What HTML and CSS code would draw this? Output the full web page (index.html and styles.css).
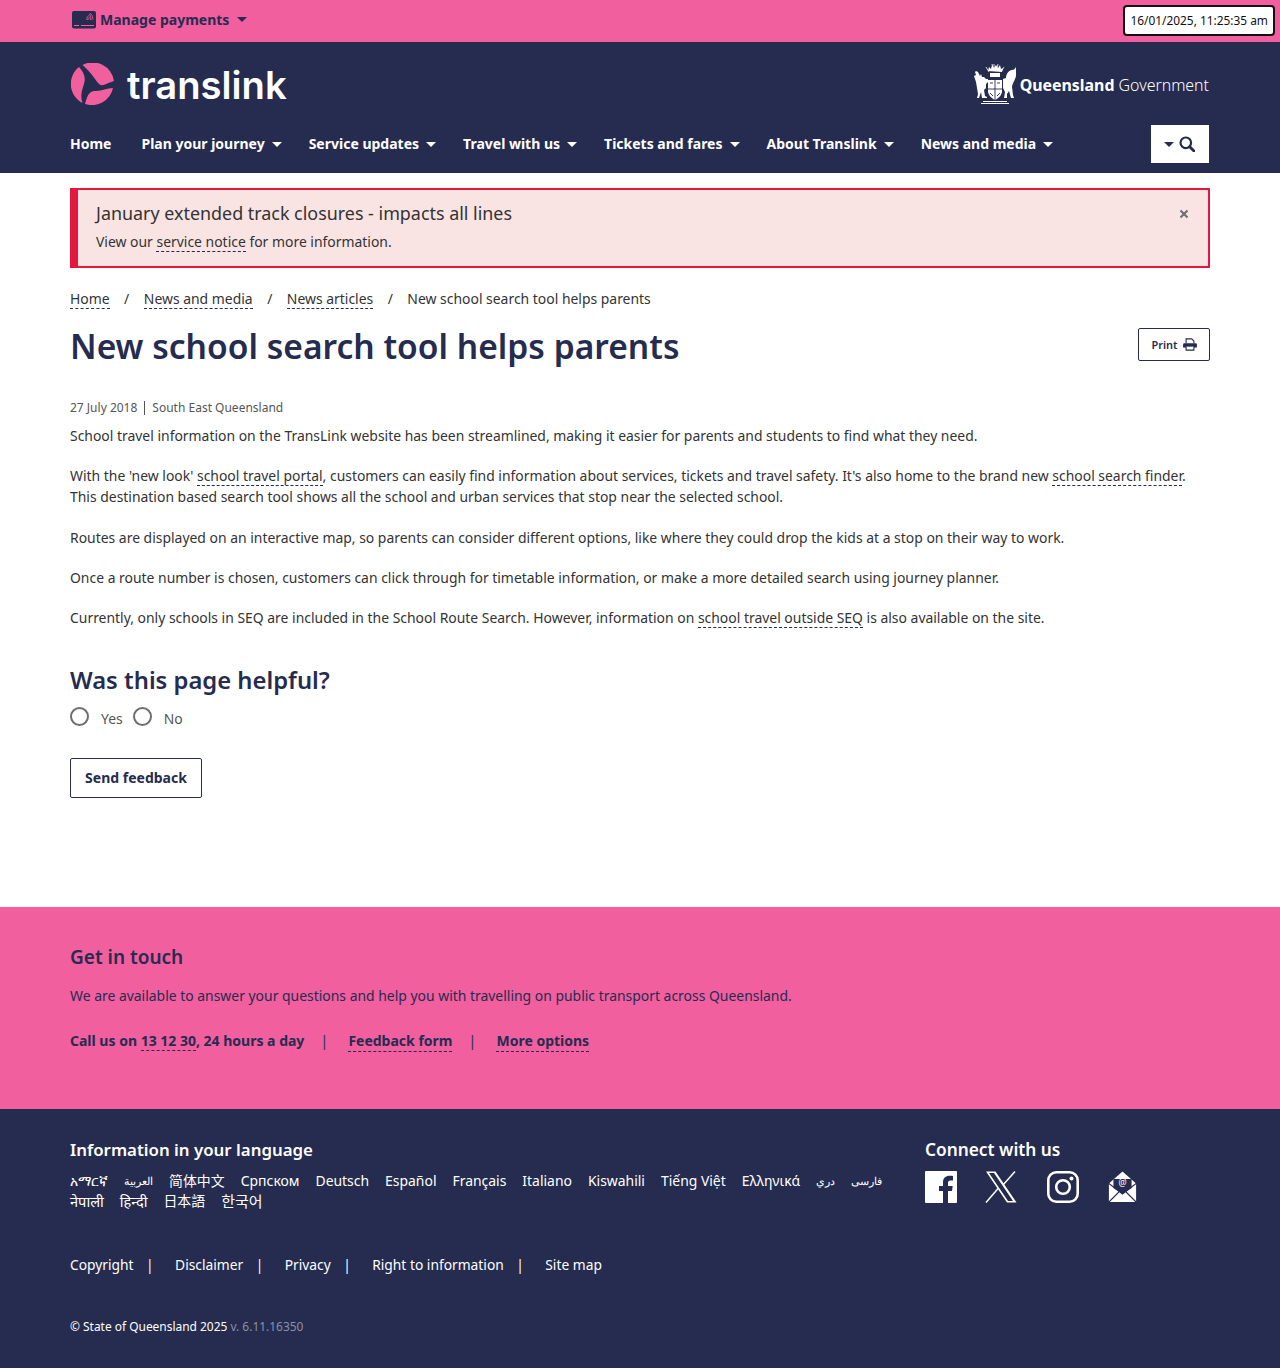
FILE: index.html
```html
<!DOCTYPE html>
<html lang="en">
<head>
<meta charset="utf-8">
<title>New school search tool helps parents</title>
<link rel="stylesheet" href="styles.css">
</head>
<body>
<div class="topbar">
  <a class="manage">
    <svg class="card-icon" viewBox="0 0 24 18" width="24" height="18"><rect x="0" y="0" width="24" height="17.500" rx="2" fill="#252c4f"/><rect x="2" y="14" width="5" height="1" fill="#f15f9f"/><rect x="9" y="14" width="13" height="1" fill="#f15f9f"/><path d="M15 8.500h1M14.500 8.500q.5-3.500 2.500-4M16.500 8.500q.5-2.500 1.500-3M18 8.500h1.500M19 8.500q0-3-1.500-5.500M21 8.500q0-4-3-6.500" stroke="#f15f9f" stroke-width=".8" fill="none"/></svg>
    <span>Manage payments</span><i class="caret caret-dark"></i>
  </a>
  <div class="clock">16/01/2025, 11:25:35 am</div>
</div>
<header class="site-header">
  <div class="brand-row">
    <div class="logo">
      <svg viewBox="2 3 44 42" width="44" height="42"><g fill="#f15f9f"><path d="M13.500 5A21.500 21.500 0 0 1 45 21C38 23 35 26 32 25C28 24 26 16 13.500 5Z"/><path d="M10 7A21.500 21.500 0 0 0 13.500 43C11 36 13 30 15 24C17 18 15 12 10 7Z"/><path d="M16 44A21.500 21.500 0 0 0 44 28C38 28 33 31 27 31C21 31 19 33 16 44Z"/></g></svg>
      <span class="logo-text">translink</span>
    </div>
    <div class="qg">
      <svg viewBox="4 2 42 44" width="42" height="44"><g fill="#fff" stroke="none"><path d="M18 10l1-4 2 2 1-4 2 3 2-3 2 3 2-3 1 4 2-1-1 4z"/><path d="M20 12h10v4H20z"/><path d="M6 10l2 1 2 4 1-2 1 3 2 0 2 2 2 0v3l-2 2v4l-2 2 1 6 2 1v1h-5l-1-6-2 6H7l1-4-1-6-1-6-2-6 2-1-1-3z"/><path d="M33 18l3-1c0-4 3-8 6-8 2 0 3-1 4-3-0 4 1 8-1 12-1 3-3 5-3 8l1 8 1 3h-3l-2-7-2 3v4h-3l1-6-2-4z"/><path d="M18 19h14v11c0 4-3 7-7 9-4-2-7-5-7-9z"/><path d="M11 42h28v1H11zM13 40h24v1H13z"/></g><g fill="none" stroke="#252c4f" stroke-width=".9"><path d="M25 19v20M18 28h14M20 22h3M27 22h3M20 32l3 3M30 32l-3 3"/></g><g stroke="#fff" stroke-width=".8"><path d="M16 6l3 5M34 6l-3 5M24 3v4M28 3l-1 4M22 3l1 4"/></g></svg>
      <span class="qg-text"><b>Queensland</b> Government</span>
    </div>
  </div>
  <nav class="main-nav">
    <a class="nav-home">Home</a>
    <a>Plan your journey<i class="caret"></i></a>
    <a>Service updates<i class="caret"></i></a>
    <a>Travel with us<i class="caret"></i></a>
    <a>Tickets and fares<i class="caret"></i></a>
    <a>About Translink<i class="caret"></i></a>
    <a>News and media<i class="caret"></i></a>
    <button class="search-btn" type="button" aria-label="Search">
      <i class="caret caret-dark caret-small"></i>
      <svg viewBox="0 0 16 16" width="16" height="16"><circle cx="6.800" cy="6.800" r="5.300" fill="none" stroke="#252c4f" stroke-width="2.200"/><path d="M10.700 10.700L15 15" stroke="#252c4f" stroke-width="2.800" stroke-linecap="round"/></svg>
    </button>
  </nav>
</header>
<main class="content">
  <div class="alert">
    <div>
      <div class="alert-title">January extended track closures - impacts all lines</div>
      <div class="alert-body">View our <a class="dlink">service notice</a> for more information.</div>
    </div>
    <svg class="alert-close" viewBox="0 0 10 10" width="10" height="10"><path d="M1.500 1.500l7 7M8.500 1.500l-7 7" stroke="#6b6a70" stroke-width="2"/></svg>
  </div>
  <ol class="crumbs">
    <li><a class="dlink">Home</a></li>
    <li><a class="dlink">News and media</a></li>
    <li><a class="dlink">News articles</a></li>
    <li>New school search tool helps parents</li>
  </ol>
  <div class="title-row">
    <h1>New school search tool helps parents</h1>
    <button class="print" type="button">Print
      <svg viewBox="0 0 16 15" width="14" height="13"><path d="M3.500 6V1h6.500l2.500 2.500V6" fill="none" stroke="#252c4f" stroke-width="1.300"/><path d="M0 7.500q0-1.500 1.500-1.500h13q1.500 0 1.500 1.500V11h-16z" fill="#252c4f"/><path d="M3.500 10v4h9v-4" fill="#fff" stroke="#252c4f" stroke-width="1.300"/></svg>
    </button>
  </div>
  <div class="meta"><span>27 July 2018</span><span class="meta-region">South East Queensland</span></div>
  <p>School travel information on the TransLink website has been streamlined, making it easier for parents and students to find what they need.</p>
  <p class="p-wide">With the 'new look' <a class="dlink">school travel portal</a>, customers can easily find information about services, tickets and travel safety. It's also home to the brand new <a class="dlink">school search finder</a>. This destination based search tool shows all the school and urban services that stop near the selected school.</p>
  <p>Routes are displayed on an interactive map, so parents can consider different options, like where they could drop the kids at a stop on their way to work.</p>
  <p>Once a route number is chosen, customers can click through for timetable information, or make a more detailed search using journey planner.</p>
  <p>Currently, only schools in SEQ are included in the School Route Search. However, information on <a class="dlink">school travel outside SEQ</a> is also available on the site.</p>
  <h2>Was this page helpful?</h2>
  <div class="radios">
    <label class="radio"><i></i>Yes</label>
    <label class="radio"><i></i>No</label>
  </div>
  <button class="send" type="button">Send feedback</button>
</main>
<section class="touch">
  <h3>Get in touch</h3>
  <p>We are available to answer your questions and help you with travelling on public transport across Queensland.</p>
  <div class="touch-links">
    <span>Call us on <a class="dlink">13 12 30</a>, 24 hours a day</span>
    <a class="dlink">Feedback form</a>
    <a class="dlink">More options</a>
  </div>
</section>
<footer class="site-footer">
  <div class="footer-top">
    <div class="langs">
      <h4>Information in your language</h4>
      <div class="lang-list">
        <a>አማርኛ</a><a class="ar">العربية</a><a>简体中文</a><a>Српском</a><a>Deutsch</a><a>Español</a><a>Français</a><a>Italiano</a><a>Kiswahili</a><a>Tiếng Việt</a><a>Ελληνικά</a><a class="ar">دري</a><a class="fa">فارسی</a><a class="hi">नेपाली</a><a class="hi">हिन्दी</a><a>日本語</a><a class="ko">한국어</a>
      </div>
    </div>
    <div class="connect">
      <h4>Connect with us</h4>
      <div class="socials">
        <svg viewBox="0 0 32 32" width="32" height="32"><path d="M1 0h30a1 1 0 0 1 1 1v30a1 1 0 0 1-1 1h-8V20h4l.7-5H23v-3c0-1.500.6-2.500 2.500-2.500H28V5c-1-.2-2.200-.3-3.500-.3-3.700 0-6.500 2.300-6.500 6.500V15h-4v5h4v12H1a1 1 0 0 1-1-1V1a1 1 0 0 1 1-1z" fill="#fff"/></svg>
        <svg class="x-icon" viewBox="0 0 32 32" width="32" height="32"><path d="M1 0.500h9.500L31.500 31.500H22zM4 2l19 28h5L9 2z" fill="#fff" fill-rule="evenodd"/><path d="M1 31.500L13.500 17M30 .5L18 14" stroke="#fff" stroke-width="1.500"/></svg>
        <svg viewBox="0 0 32 32" width="32" height="32"><rect x="1.300" y="1.300" width="29.400" height="29.400" rx="8" fill="none" stroke="#fff" stroke-width="2.600"/><circle cx="16" cy="16" r="6.800" fill="none" stroke="#fff" stroke-width="2.600"/><circle cx="24.500" cy="7.500" r="2" fill="#fff"/></svg>
        <svg viewBox="0 0 32 32" width="29" height="32" preserveAspectRatio="none"><path d="M1 12.500L16 .5 31 12.500V31H1z" fill="#fff"/><path d="M6 17V8h20v9l-10 6z" fill="#252c4f"/><path d="M1 12.500L16 23l15-10.500M1 31l11-10M31 31L20 21" fill="none" stroke="#252c4f" stroke-width="1.200"/><text class="env-at" x="16" y="15" text-anchor="middle">@</text></svg>
      </div>
    </div>
  </div>
  <div class="legal">
    <a>Copyright</a><a>Disclaimer</a><a>Privacy</a><a>Right to information</a><a>Site map</a>
  </div>
  <div class="copyright">© State of Queensland 2025 <span>v. 6.11.16350</span></div>
</footer>
</body>
</html>
```
FILE: styles.css
```css
* { box-sizing: border-box; }
html, body { margin: 0; padding: 0; }
body {
  font-family: "Noto Sans", "Noto Sans CJK SC", sans-serif;
  font-size: 13.930px;
  line-height: 21px;
  color: #333;
  background: #fff;
}
a { color: inherit; text-decoration: none; }
i { font-style: normal; }
.dlink { border-bottom: 1px dashed #252c4f; }
.caret {
  display: inline-block;
  width: 0; height: 0;
  margin-left: 7px;
  vertical-align: 2px;
  border-left: 5px solid transparent;
  border-right: 5px solid transparent;
  border-top: 5px solid #fff;
}
.caret-dark { border-top-color: #252c4f; }
.caret-small { margin: 0; }

/* top bar */
.topbar {
  height: 42px;
  background: #f15f9f;
  display: flex;
  justify-content: space-between;
  align-items: center;
  padding: 0 5px 0 72px;
}
.manage {
  display: flex;
  align-items: center;
  gap: 4px;
  font-weight: 700;
  font-size: 14px;
  color: #252c4f;
  margin-top: -3px;
}
.manage .caret { margin-left: 4px; vertical-align: 0; }
.clock {
  background: #fff;
  border: 2px solid #111;
  border-radius: 4px;
  height: 31px;
  padding: 0 5px;
  font-size: 11.900px;
  line-height: 27px;
  color: #111;
  margin-top: -1px;
}

/* header */
.site-header { background: #252c4f; height: 131px; padding: 0 70px; color: #fff; }
.brand-row { display: flex; justify-content: space-between; align-items: center; height: 83px; }
.logo { display: flex; align-items: center; gap: 12px; margin-left: 1px; }
.logo-text { font-family: "Inter", sans-serif; font-size: 38.200px; line-height: 42px; font-weight: 600; margin-top: 2px; }
.qg { display: flex; align-items: center; gap: 4px; margin-right: 1px; margin-top: 2px; }
.qg-text { font-size: 15.900px; font-weight: 300; margin-top: 2px; }
.qg-text b { font-weight: 700; }
.main-nav { display: flex; align-items: center; gap: 27px; font-weight: 700; font-size: 14px; height: 38px; }
.main-nav a { margin-top: -2px; }
.nav-home { margin-right: 3px; }
.search-btn {
  margin-left: auto;
  margin-right: 1px;
  width: 58px; height: 38px;
  border: 0;
  background: #fff;
  display: flex;
  align-items: center;
  justify-content: center;
  gap: 5px;
  padding: 0 2px 0 0;
}

/* main */
.content { padding: 15px 70px 109px; }
.alert {
  height: 80px;
  background: #f9e4e3;
  border: 2px solid #e4173e;
  border-left-width: 8px;
  padding: 11px 19px 0 18px;
  display: flex;
  justify-content: space-between;
}
.alert-title { font-size: 17.900px; line-height: 25px; }
.alert-body { margin-top: 6px; line-height: 20px; }
.alert-close { margin-top: 8px; }
.crumbs { list-style: none; margin: 20px 0 0; padding: 0; display: flex; }
.crumbs li + li::before { content: "/"; margin: 0 14.500px; }
.title-row { display: flex; justify-content: space-between; align-items: flex-start; margin-top: 15px; }
h1 { margin: 0; font-size: 33.600px; line-height: 44px; font-weight: 600; color: #252c4f; }
.print {
  margin-top: 4px;
  width: 72px; height: 33px;
  background: #fff;
  border: 1px solid #252c4f;
  border-radius: 2px;
  font: 600 11px "Noto Sans", sans-serif;
  color: #252c4f;
  display: flex;
  align-items: center;
  justify-content: center;
  gap: 5px;
  padding: 0;
}
.meta { margin-top: 31px; font-size: 12px; line-height: 18px; color: #555; display: flex; }
.meta-region { margin-left: 7px; padding-left: 8px; position: relative; }
.meta-region::before { content: ""; position: absolute; left: 0; top: 2px; bottom: 2px; width: 1px; background: #555; }
.content p { margin: 8px 0 19px; }
.content p + p { margin-top: 0; }
.content .p-wide { margin-bottom: 20px; }
h2 { margin: 36px 0 0; font-size: 23.800px; line-height: 32px; font-weight: 600; color: #252c4f; }
.radios { display: flex; gap: 10px; margin: 12px 0 0; }
.radio { display: flex; align-items: center; gap: 12px; color: #555; }
.radio i { width: 19px; height: 19px; border: 2px solid #6e6e6e; border-radius: 50%; background: #fff; margin-top: -5px; }
.send {
  display: block;
  margin-top: 29px;
  width: 132px; height: 40px;
  background: #fff;
  border: 1px solid #252c4f;
  border-radius: 2px;
  font: 700 14px "Noto Sans", sans-serif;
  color: #252c4f;
  padding: 0 0 2px;
}

/* get in touch */
.touch { background: #f15f9f; height: 202px; padding: 36px 70px 0; color: #252c4f; }
.touch h3 { margin: 0; font-size: 19px; line-height: 28px; font-weight: 600; }
.touch p { margin: 14px 0 0; }
.touch-links { margin-top: 24px; display: flex; font-size: 14px; font-weight: 700; }
.touch-links > span { margin-right: 19px; }
.touch-links > a { margin-left: 25px; margin-right: 19px; position: relative; }
.touch-links > a::before { content: "|"; position: absolute; left: -28px; font-weight: 400; }

/* footer */
.site-footer { background: #252c4f; height: 259px; padding: 28px 70px 0; color: #fff; }
.footer-top { display: flex; justify-content: space-between; height: 92px; }
.langs { width: 820px; }
.connect { width: 285px; }
h4 { margin: 0; font-size: 16.850px; line-height: 26px; font-weight: 600; color: #fff; }
.connect h4 { font-size: 17.300px; }
.lang-list { display: flex; flex-wrap: wrap; column-gap: 16px; margin-top: 8px; line-height: 20px; }
.lang-list .ar { font-size: 11px; }
.lang-list .fa { font-size: 10.800px; }
.lang-list .hi { font-size: 14.600px; }
.lang-list .ko { font-size: 15px; }
.socials { display: flex; gap: 29px; margin-top: 8px; }
.socials svg { display: block; }
.socials .x-icon { margin: 0 1px 0 -1px; }
.env-at { font-size: 10px; fill: #fff; font-family: "Noto Sans", sans-serif; }
.legal { display: flex; margin-top: 25px; font-size: 13.800px; }
.legal a { margin-right: 41.500px; position: relative; }
.legal a + a::before { content: "|"; position: absolute; left: -29px; }
.copyright { margin-top: 41px; font-size: 11.950px; }
.copyright span { color: #8a8fa8; }
```
